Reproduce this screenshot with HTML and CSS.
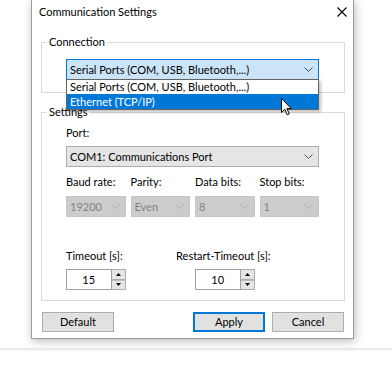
FILE: index.html
```html
<!DOCTYPE html>
<html lang="en">
<head>
    <meta charset="UTF-8">
    <title>Communication Settings</title>
    <link rel="stylesheet" href="styles.css">
</head>
<body>
    <div class="desk">
        <div class="window">
            <div class="titlebar">
                <span class="title">Communication Settings</span>
                <svg class="close" width="10" height="10" viewBox="0 0 10 10">
                    <path d="M0.5 0.5 L9.5 9.5 M9.5 0.5 L0.5 9.5" stroke="#000" stroke-width="1.1" fill="none"/>
                </svg>
            </div>

            <div class="group conn">
                <div class="legend">Connection</div>
                <div class="combo active">
                    <span>Serial Ports (COM, USB, Bluetooth,...)</span>
                    <svg class="chev" width="9" height="5" viewBox="0 0 9 5"><path d="M0.5 0.5 L4.5 4.5 L8.5 0.5" stroke="#444" fill="none"/></svg>
                    <div class="droplist">
                        <div class="item">Serial Ports (COM, USB, Bluetooth,...)</div>
                        <div class="item selected">Ethernet (TCP/IP)</div>
                    </div>
                </div>
            </div>

            <div class="group settings">
                <div class="legend">Settings</div>
                <div class="label port-label">Port:</div>
                <div class="combo">
                    <span>COM1: Communications Port</span>
                    <svg class="chev" width="9" height="5" viewBox="0 0 9 5"><path d="M0.5 0.5 L4.5 4.5 L8.5 0.5" stroke="#555" fill="none"/></svg>
                </div>

                <div class="grid4 serial-labels">
                    <div class="label">Baud rate:</div>
                    <div class="label">Parity:</div>
                    <div class="label">Data bits:</div>
                    <div class="label">Stop bits:</div>
                </div>
                <div class="grid4 serial-combos">
                    <div class="combo disabled"><span>19200</span><svg class="chev" width="9" height="5" viewBox="0 0 9 5"><path d="M0.5 0.5 L4.5 4.5 L8.5 0.5" stroke="#a8a8a8" fill="none"/></svg></div>
                    <div class="combo disabled"><span>Even</span><svg class="chev" width="9" height="5" viewBox="0 0 9 5"><path d="M0.5 0.5 L4.5 4.5 L8.5 0.5" stroke="#a8a8a8" fill="none"/></svg></div>
                    <div class="combo disabled"><span>8</span><svg class="chev" width="9" height="5" viewBox="0 0 9 5"><path d="M0.5 0.5 L4.5 4.5 L8.5 0.5" stroke="#a8a8a8" fill="none"/></svg></div>
                    <div class="combo disabled"><span>1</span><svg class="chev" width="9" height="5" viewBox="0 0 9 5"><path d="M0.5 0.5 L4.5 4.5 L8.5 0.5" stroke="#a8a8a8" fill="none"/></svg></div>
                </div>

                <div class="grid4 timeout-labels">
                    <div class="label">Timeout [s]:</div>
                    <div class="label col3">Restart-Timeout [s]:</div>
                </div>
                <div class="grid4 timeout-spins">
                    <div class="spin">
                        <div class="spin-text">15</div>
                        <div class="spin-btns">
                            <div class="sb"><svg width="5" height="3" viewBox="0 0 5 3"><path d="M0 3 L2.5 0 L5 3 Z" fill="#000"/></svg></div>
                            <div class="sb"><svg width="5" height="3" viewBox="0 0 5 3"><path d="M0 0 L2.5 3 L5 0 Z" fill="#000"/></svg></div>
                        </div>
                    </div>
                    <div class="spin col3">
                        <div class="spin-text">10</div>
                        <div class="spin-btns">
                            <div class="sb"><svg width="5" height="3" viewBox="0 0 5 3"><path d="M0 3 L2.5 0 L5 3 Z" fill="#000"/></svg></div>
                            <div class="sb"><svg width="5" height="3" viewBox="0 0 5 3"><path d="M0 0 L2.5 3 L5 0 Z" fill="#000"/></svg></div>
                        </div>
                    </div>
                </div>
            </div>

            <div class="buttons">
                <div class="btn default">Default</div>
                <div class="btn primary">Apply</div>
                <div class="btn">Cancel</div>
            </div>
        </div>
        <div class="behind"></div>

        <svg class="pointer" width="12" height="18" viewBox="0 0 12 18">
            <path d="M0.5 0.5 L0.5 14.5 L3.8 11.3 L6.2 16.8 L8.3 15.9 L5.9 10.6 L10.3 10.6 Z" fill="#fff" stroke="#000" stroke-width="1" stroke-linejoin="round"/>
        </svg>
    </div>
</body>
</html>
```

FILE: styles.css
```css
body {
    margin: 0;
    background-color: #ffffff;
    font-family: "Segoe UI", Lato, "Noto Sans", sans-serif;
    font-size: 11px;
    color: #000000;
}

.desk {
    position: relative;
    height: 366px;
    overflow: hidden;
}

.window {
    position: relative;
    z-index: 1;
    width: 321px;
    margin-left: 31px;
    padding-bottom: 6px;
    border: 1px solid #9c9c9c;
    border-top: none;
    background-color: #ffffff;
    box-shadow: 1px 2px 9px rgba(0, 0, 0, 0.28);
}

.titlebar {
    display: flex;
    align-items: center;
    justify-content: space-between;
    height: 24px;
    padding: 0 6px 0 7px;
    margin-bottom: 18px;
}

.title {
    line-height: 16px;
}

.group {
    margin: 0 8px 0 9px;
    padding: 0 25px 12px 24px;
    border: 1px solid #dcdcdc;
}

.settings {
    margin-top: 19px;
    padding-bottom: 10px;
}

.legend {
    display: table;
    margin: -9px 0 0 -19px;
    padding: 0 2px;
    line-height: 16px;
    background-color: #ffffff;
}

.label {
    line-height: 16px;
    white-space: nowrap;
}

.combo {
    position: relative;
    display: flex;
    align-items: center;
    justify-content: space-between;
    height: 21px;
    box-sizing: border-box;
    padding: 0 5px 0 3px;
    border: 1px solid #adadad;
    background-color: #e5e5e5;
    white-space: nowrap;
}

.conn .combo {
    margin-top: 9px;
}

.combo.active {
    border-color: #0078d7;
    background-color: #cce4f7;
}

.combo.disabled {
    border-color: #c6c6c6;
    background-color: #cccccc;
    color: #838383;
}

.chev {
    flex: none;
}

.droplist {
    position: absolute;
    top: 100%;
    left: -1px;
    right: -1px;
    z-index: 2;
    border: 1px solid #646464;
    background-color: #ffffff;
    box-shadow: 2px 2px 3px rgba(0, 0, 0, 0.25);
}

.droplist .item {
    height: 14px;
    line-height: 14px;
    padding-left: 3px;
}

.droplist .item.selected {
    height: 15px;
    line-height: 15px;
    background-color: #0078d7;
    color: #ffffff;
}

.port-label {
    margin: 5px 0 5px;
}

.grid4 {
    display: grid;
    grid-template-columns: repeat(4, 1fr);
    column-gap: 5px;
}

.col3 {
    grid-column: 3;
}

.serial-labels {
    margin-top: 7px;
}

.serial-combos {
    margin-top: 6px;
}

.timeout-labels {
    margin-top: 31px;
}

.timeout-spins {
    margin-top: 5px;
}

.spin {
    display: flex;
    height: 21px;
}

.spin-text {
    flex: 1;
    box-sizing: border-box;
    border: 1px solid #a0a0a0;
    text-align: center;
    line-height: 19px;
}

.spin-btns {
    display: flex;
    flex-direction: column;
    width: 14px;
}

.sb {
    flex: 1;
    display: flex;
    align-items: center;
    justify-content: center;
    box-sizing: border-box;
    border: 1px solid #adadad;
    border-left: none;
    background-color: #e5e5e5;
}

.sb + .sb {
    border-top: 1px solid #bdbdbd;
}

.buttons {
    display: flex;
    gap: 7px;
    margin: 11px 9px 0 10px;
}

.btn {
    width: 72px;
    height: 20px;
    box-sizing: border-box;
    border: 1px solid #adadad;
    background-color: #e1e1e1;
    text-align: center;
    line-height: 18px;
}

.btn.default {
    margin-right: auto;
}

.btn.primary {
    border-color: #0078d7;
    box-shadow: inset 0 0 0 1px #0078d7;
}

.behind {
    height: 3px;
    margin-top: 9px;
    background: linear-gradient(#e6e6e6, #f8f8f8);
}

.pointer {
    position: absolute;
    left: 281px;
    top: 98px;
    z-index: 3;
}
```
